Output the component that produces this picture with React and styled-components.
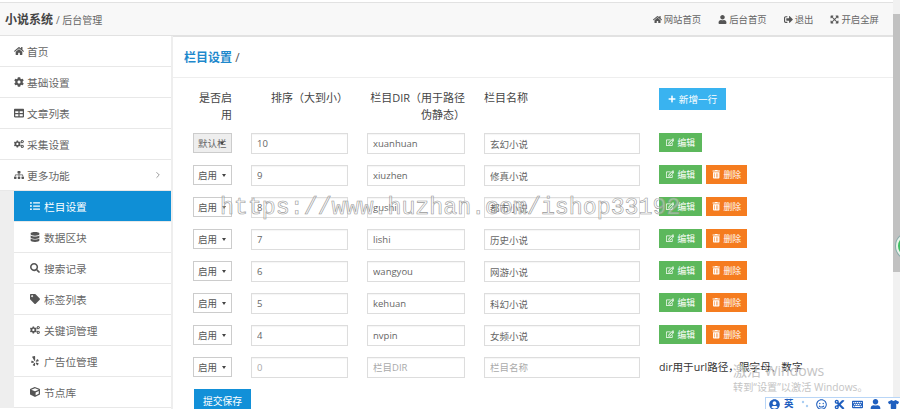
import React from 'react'
import styled, { createGlobalStyle } from 'styled-components'
import {
  FaHome, FaUser, FaSignOutAlt, FaExpandArrowsAlt, FaCog, FaTable, FaCogs, FaSitemap,
  FaListUl, FaDatabase, FaSearch, FaTag, FaYelp, FaCube, FaPlus, FaRegEdit,
  FaTrashAlt, FaUserCircle, FaRegSmile, FaCut, FaKeyboard, FaTshirt,
} from 'react-icons/fa'
import { FiChevronRight } from 'react-icons/fi'

const Global = createGlobalStyle`
  html, body { margin: 0; padding: 0; height: 409px; overflow: hidden; background: #fff; }
  * { box-sizing: border-box; }
  body { font-family: "Open Sans", "Noto Sans CJK SC", sans-serif; color: #555; }
`
const Page = styled.div`
  position: relative;
  display: flex;
  width: 900px;
  height: 409px;
  overflow: hidden;
`
const Content = styled.div`
  flex: 1;
  min-width: 0;
  padding-top: 2px;
`
const Navbar = styled.div`
  display: flex;
  align-items: center;
  justify-content: space-between;
  height: 35px;
  padding: 0 14px 0 5px;
  background: #f8f8f8;
  border-top: 1px solid #e2e2e2;
  border-bottom: 2px solid #e2e2e2;
`
const Brand = styled.div`
  display: flex;
  align-items: baseline;
  gap: 3px;
  font-size: 10px;
  color: #666;
  b { font-size: 12px; color: #444; }
`
const TopLinks = styled.div`
  display: flex;
  gap: 17px;
`
const TopLink = styled.span`
  display: flex;
  align-items: center;
  gap: 2px;
  font-size: 9.4px;
  color: #666;
  svg { font-size: 9px; color: #555; }
`
const Body = styled.div`
  display: flex;
  margin-top: -1px;
`
const Sidebar = styled.div`
  flex: none;
  width: 173px;
  height: 373px;
  border-right: 2px solid #eee;
  background: #fff;
`
const SubMenu = styled.div`
  padding-left: 14px;
  background: #eee;
`
const MenuItem = styled.div`
  display: flex;
  align-items: center;
  gap: ${p => (p.$sub ? '4px' : '3px')};
  height: 31px;
  padding-left: ${p => (p.$sub ? '16px' : '14px')};
  font-size: 10.7px;
  color: ${p => (p.$active ? '#fff' : '#666')};
  background: ${p => (p.$active ? '#0f8fd6' : '#fff')};
  border-bottom: 1px solid #e8e8e8;
  svg { flex: none; font-size: 10px; color: ${p => (p.$active ? '#fff' : '#555')}; }
`
const Chevron = styled.span`
  display: flex;
  margin-left: auto;
  margin-right: 8px;
  svg { color: #888; }
`
const Main = styled.div`
  flex: 1;
  min-width: 0;
`
const TitleBar = styled.div`
  height: 42px;
  padding: 12px 0 0 11px;
  border-bottom: 1px solid #eee;
  font-size: 12px;
  color: #555;
  b { color: #1e88cc; }
`
const FormGrid = styled.div`
  display: grid;
  grid-template-columns: 39px 97px 98px 156px auto;
  grid-template-rows: 34px;
  column-gap: 19px;
  row-gap: 11px;
  grid-auto-rows: 21px;
  padding: 10px 0 0 20px;
`
const HeadCell = styled.div`
  height: 34px;
  padding-top: 1px;
  font-size: 11px;
  line-height: 17px;
  color: #444;
  text-align: ${p => (p.$left ? 'left' : 'right')};
  white-space: pre-line;
`
const Dropdown = styled.div`
  display: flex;
  align-items: center;
  gap: 5px;
  height: 20px;
  padding-left: 4px;
  font-size: 9.5px;
  color: #555;
  background: #fff;
  border: 1px solid #ccc;
  &::after {
    content: "";
    border-top: 3px solid #444;
    border-left: 2.5px solid transparent;
    border-right: 2.5px solid transparent;
  }
`
const DefaultDropdown = styled(Dropdown)`
  background: #eee;
  color: #666;
  gap: 0;
  &::after { margin-left: -7px; }
`
const Field = styled.input`
  width: 100%;
  height: 21px;
  padding: 0 5px;
  font: 9.5px "Open Sans", "Noto Sans CJK SC", sans-serif;
  color: #666;
  border: 1px solid #ddd;
  border-radius: 0;
  outline: none;
  box-shadow: inset 0 1px 1px rgba(0,0,0,.04);
  &::placeholder { color: #aaa; }
`
const Actions = styled.div`
  display: flex;
  gap: 4px;
`
const SmallButton = styled.div`
  display: flex;
  align-items: center;
  justify-content: center;
  gap: 3px;
  height: 19px;
  width: ${p => p.$w}px;
  font-size: 8.8px;
  color: #fff;
  background: ${p => p.$bg};
  svg { font-size: 8.5px; }
`
const AddButton = styled.div`
  display: flex;
  align-items: center;
  justify-content: center;
  gap: 3px;
  width: 67px;
  height: 22px;
  font-size: 9.6px;
  color: #fff;
  background: #39b3f0;
  svg { font-size: 8px; }
`
const Hint = styled.div`
  font-size: 10.6px;
  line-height: 21px;
  color: #333;
  white-space: nowrap;
`
const SubmitButton = styled.div`
  display: flex;
  align-items: center;
  justify-content: center;
  width: 57px;
  height: 24px;
  margin: 11px 0 0 21px;
  font-size: 9.8px;
  color: #fff;
  background: #1290d8;
`
const ScrollTrack = styled.div`
  flex: none;
  display: flex;
  flex-direction: column;
  width: 7px;
  padding-top: 3px;
  background: #f1f1f1;
`
const ScrollArrow = styled.div`
  height: 11px;
  flex: none;
`
const ScrollThumb = styled.div`
  height: 258px;
  background: #c1c1c1;
`
const Watermark = styled.div`
  position: absolute;
  left: 220px;
  top: 194px;
  font: 23.25px/28px "Liberation Mono", monospace;
  color: rgba(255,255,255,.35);
  -webkit-text-stroke: .6px #999;
  white-space: nowrap;
`
const ActivateNote = styled.div`
  position: absolute;
  left: 733px;
  top: 361px;
  color: #c4c4c4;
  font-size: 10.2px;
  line-height: 14px;
  span { display: block; font-size: 14px; line-height: 19px; }
`
const ImeBar = styled.div`
  position: absolute;
  left: 765px;
  top: 397px;
  display: flex;
  align-items: flex-start;
  gap: 7px;
  width: 135px;
  height: 12px;
  padding-left: 3px;
  background: #fff;
  border: 1px solid #b9d6f7;
  border-right: 0;
  border-bottom: 0;
  font-size: 9.5px;
  line-height: 11px;
  font-weight: 700;
  color: #1f5fbf;
  overflow: hidden;
  svg { flex: none; font-size: 11px; margin-top: 1px; }
`
const ImeLang = styled.span`
  margin-left: -3px;
`
const ImeDots = styled.svg`
  width: 8px;
  height: 10px;
  color: #a9cdf2;
`
const SideBadge = styled.div`
  position: absolute;
  left: 896px;
  top: 233px;
  width: 26px;
  height: 26px;
  border-radius: 50%;
  background: #3fbf62;
  border: 2px solid #e8f3ea;
  box-shadow: 0 0 0 1px #8aa;
`

const topLinks = [
  [FaHome, '网站首页'],
  [FaUser, '后台首页'],
  [FaSignOutAlt, '退出'],
  [FaExpandArrowsAlt, '开启全屏'],
]
const mainMenu = [
  [FaHome, '首页'],
  [FaCog, '基础设置'],
  [FaTable, '文章列表'],
  [FaCogs, '采集设置'],
]
const subMenu = [
  [FaListUl, '栏目设置', true],
  [FaDatabase, '数据区块'],
  [FaSearch, '搜索记录'],
  [FaTag, '标签列表'],
  [FaCogs, '关键词管理'],
  [FaYelp, '广告位管理'],
  [FaCube, '节点库'],
]
const rows = [
  ['10', 'xuanhuan', '玄幻小说'],
  ['9', 'xiuzhen', '修真小说'],
  ['8', 'gushi', '都市小说'],
  ['7', 'lishi', '历史小说'],
  ['6', 'wangyou', '网游小说'],
  ['5', 'kehuan', '科幻小说'],
  ['4', 'nvpin', '女频小说'],
]

const App = () => {
  return (
    <Page>
      <Global />
      <Content>
        <Navbar>
          <Brand><b>小说系统</b> / 后台管理</Brand>
          <TopLinks>
            {topLinks.map(([Icon, label]) => (
              <TopLink key={label}><Icon />{label}</TopLink>
            ))}
          </TopLinks>
        </Navbar>
        <Body>
          <Sidebar>
            {mainMenu.map(([Icon, label]) => (
              <MenuItem key={label}><Icon />{label}</MenuItem>
            ))}
            <MenuItem><FaSitemap />更多功能<Chevron><FiChevronRight /></Chevron></MenuItem>
            <SubMenu>
              {subMenu.map(([Icon, label, active]) => (
                <MenuItem key={label} $sub $active={active}><Icon />{label}</MenuItem>
              ))}
            </SubMenu>
          </Sidebar>
          <Main>
            <TitleBar><b>栏目设置</b> /</TitleBar>
            <FormGrid>
              <HeadCell>{'是否启\n用'}</HeadCell>
              <HeadCell>排序（大到小）</HeadCell>
              <HeadCell>{'栏目DIR（用于路径\n伪静态）'}</HeadCell>
              <HeadCell $left>栏目名称</HeadCell>
              <AddButton><FaPlus />新增一行</AddButton>
              {rows.map(([sort, dir, name], i) => (
                <React.Fragment key={dir}>
                  {i === 0 ? <DefaultDropdown>默认栏</DefaultDropdown> : <Dropdown>启用</Dropdown>}
                  <Field defaultValue={sort} />
                  <Field defaultValue={dir} />
                  <Field defaultValue={name} />
                  <Actions>
                    <SmallButton $w={43} $bg="#5cb85c"><FaRegEdit />编辑</SmallButton>
                    {i > 0 && <SmallButton $w={41} $bg="#f57c1f"><FaTrashAlt />删除</SmallButton>}
                  </Actions>
                </React.Fragment>
              ))}
              <Dropdown>启用</Dropdown>
              <Field placeholder="0" />
              <Field placeholder="栏目DIR" />
              <Field placeholder="栏目名称" />
              <Hint>dir用于url路径，限字母、数字</Hint>
            </FormGrid>
            <SubmitButton>提交保存</SubmitButton>
          </Main>
        </Body>
      </Content>
      <ScrollTrack>
        <ScrollArrow />
        <ScrollThumb />
      </ScrollTrack>
      <Watermark>https://www.huzhan.com/ishop33192</Watermark>
      <ActivateNote><span>激活 Windows</span>转到“设置”以激活 Windows。</ActivateNote>
      <ImeBar>
        <FaUserCircle />
        <ImeLang>英</ImeLang>
        <ImeDots viewBox="0 0 8 10"><circle cx="2" cy="3" r="1.2" fill="currentColor" /><circle cx="6" cy="7" r="1.2" fill="currentColor" /></ImeDots>
        <FaRegSmile /><FaCut /><FaKeyboard /><FaUser /><FaTshirt /><FaHome />
      </ImeBar>
      <SideBadge />
    </Page>
  )
}

export default App
